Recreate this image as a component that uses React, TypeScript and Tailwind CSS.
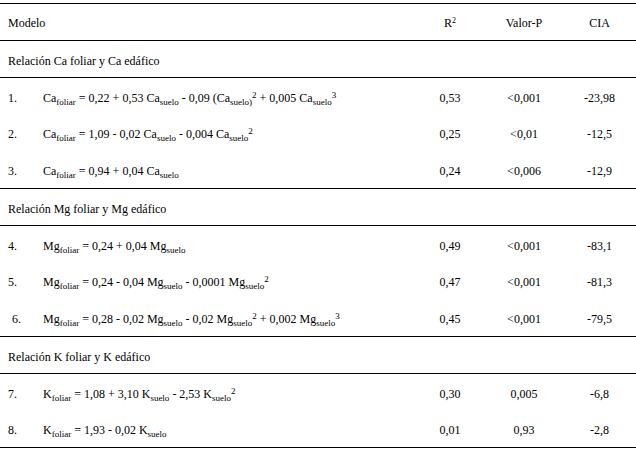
import type { ReactNode } from "react";

function Sub({ children }: { children: ReactNode }) {
  return <span className="text-[9px] leading-none align-[-3px]">{children}</span>;
}

function Sup({ children, small }: { children: ReactNode; small?: boolean }) {
  return (
    <span className={`${small ? "text-[8px] align-[4px]" : "text-[9px] align-[4px]"} leading-none`}>{children}</span>
  );
}

type Row = {
  n: string;
  f: ReactNode;
  r2: string;
  p: string;
  cia: string;
  indent?: boolean;
};

const groups: { title: string; rows: Row[] }[] = [
  {
    title: "Relación Ca foliar y Ca edáfico",
    rows: [
      {
        n: "1.",
        f: (
          <>
            Ca<Sub>foliar</Sub> = 0,22 + 0,53 Ca<Sub>suelo</Sub> - 0,09 (Ca<Sub>suelo)</Sub>
            <Sup>2</Sup> + 0,005 Ca<Sub>suelo</Sub>
            <Sup>3</Sup>
          </>
        ),
        r2: "0,53",
        p: "<0,001",
        cia: "-23,98",
      },
      {
        n: "2.",
        f: (
          <>
            Ca<Sub>foliar</Sub> = 1,09 - 0,02 Ca<Sub>suelo</Sub> - 0,004 Ca<Sub>suelo</Sub>
            <Sup>2</Sup>
          </>
        ),
        r2: "0,25",
        p: "<0,01",
        cia: "-12,5",
      },
      {
        n: "3.",
        f: (
          <>
            Ca<Sub>foliar</Sub> = 0,94 + 0,04 Ca<Sub>suelo</Sub>
          </>
        ),
        r2: "0,24",
        p: "<0,006",
        cia: "-12,9",
      },
    ],
  },
  {
    title: "Relación Mg foliar y Mg edáfico",
    rows: [
      {
        n: "4.",
        f: (
          <>
            Mg<Sub>foliar</Sub> = 0,24 + 0,04 Mg<Sub>suelo</Sub>
          </>
        ),
        r2: "0,49",
        p: "<0,001",
        cia: "-83,1",
      },
      {
        n: "5.",
        f: (
          <>
            Mg<Sub>foliar</Sub> = 0,24 - 0,04 Mg<Sub>suelo</Sub> - 0,0001 Mg<Sub>suelo</Sub>
            <Sup>2</Sup>
          </>
        ),
        r2: "0,47",
        p: "<0,001",
        cia: "-81,3",
      },
      {
        n: "6.",
        indent: true,
        f: (
          <>
            Mg<Sub>foliar</Sub> = 0,28 - 0,02 Mg<Sub>suelo</Sub> - 0,02 Mg<Sub>suelo</Sub>
            <Sup>2</Sup> + 0,002 Mg<Sub>suelo</Sub>
            <Sup>3</Sup>
          </>
        ),
        r2: "0,45",
        p: "<0,001",
        cia: "-79,5",
      },
    ],
  },
  {
    title: "Relación K foliar y K edáfico",
    rows: [
      {
        n: "7.",
        f: (
          <>
            K<Sub>foliar</Sub> = 1,08 + 3,10 K<Sub>suelo</Sub> - 2,53 K<Sub>suelo</Sub>
            <Sup>2</Sup>
          </>
        ),
        r2: "0,30",
        p: "0,005",
        cia: "-6,8",
      },
      {
        n: "8.",
        f: (
          <>
            K<Sub>foliar</Sub> = 1,93 - 0,02 K<Sub>suelo</Sub>
          </>
        ),
        r2: "0,01",
        p: "0,93",
        cia: "-2,8",
      },
    ],
  },
];

const cols = "grid grid-cols-[43px_372px_70px_78px_73px] h-[37px] items-center";

export default function App() {
  return (
    <div className="w-[636px] h-[450px] bg-white pt-[3px] text-black text-[12px] font-[family-name:Liberation_Serif,serif]">
      <div className="border-b border-black">
        <div className={`${cols} border-t border-black pt-[1px]`}>
          <div className="col-span-2 pl-[8px]">Modelo</div>
          <div className="text-center">
            R<Sup small>2</Sup>
          </div>
          <div className="text-center">Valor-P</div>
          <div className="text-center">CIA</div>
        </div>

        {groups.map((g) => (
          <div key={g.title}>
            <div className="h-[37px] flex items-center pl-[8px] pt-[3px] border-t border-black">{g.title}</div>
            {g.rows.map((r, i) => (
              <div key={r.n} className={`${cols} pt-[3px] ${i === 0 ? "border-t border-black" : ""}`}>
                <div className={r.indent ? "pl-[12px]" : "pl-[8px]"}>{r.n}</div>
                <div className="whitespace-nowrap">{r.f}</div>
                <div className="text-center">{r.r2}</div>
                <div className="text-center">{r.p}</div>
                <div className="text-center">{r.cia}</div>
              </div>
            ))}
          </div>
        ))}
      </div>
    </div>
  );
}
